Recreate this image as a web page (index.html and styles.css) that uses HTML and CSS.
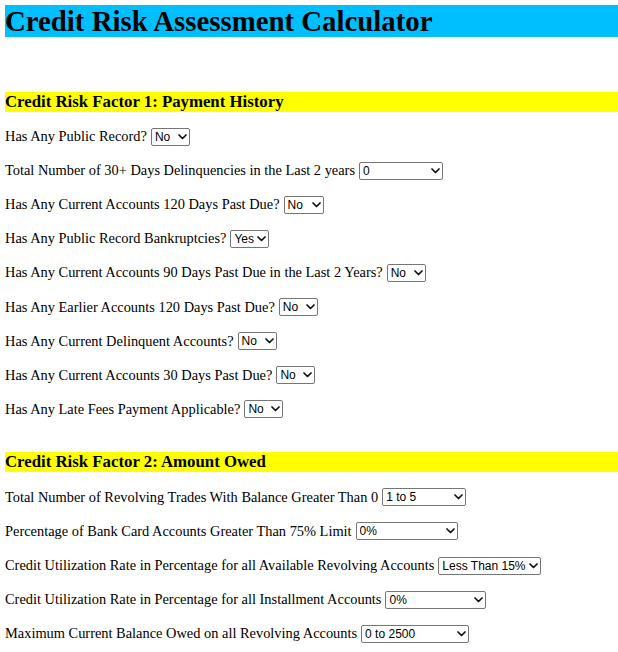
FILE: index.html
```html
<!DOCTYPE html>
<html lang="en">
<head>
<meta charset="utf-8">
<title>Credit Risk Assessment Calculator</title>
<link rel="stylesheet" href="styles.css">
</head>
<body>
<h1 class="title">Credit Risk Assessment Calculator</h1>

<section class="section">
  <h3 class="section-title">Credit Risk Factor 1: Payment History</h3>
  <div class="row"><label>Has Any Public Record?</label><span class="sel-wrap"><select class="sel w-39"><option>No</option><option>Yes</option></select><svg class="chev" viewBox="0 0 9 6"><path d="M1 1L4.5 4.5L8 1"/></svg></span></div>
  <div class="row"><label>Total Number of 30+ Days Delinquencies in the Last 2 years</label><span class="sel-wrap"><select class="sel w-84"><option>0</option><option>1</option><option>2</option><option>3 or More</option></select><svg class="chev" viewBox="0 0 9 6"><path d="M1 1L4.5 4.5L8 1"/></svg></span></div>
  <div class="row"><label>Has Any Current Accounts 120 Days Past Due?</label><span class="sel-wrap"><select class="sel w-40"><option>No</option><option>Yes</option></select><svg class="chev" viewBox="0 0 9 6"><path d="M1 1L4.5 4.5L8 1"/></svg></span></div>
  <div class="row"><label>Has Any Public Record Bankruptcies?</label><span class="sel-wrap"><select class="sel w-39"><option>Yes</option><option>No</option></select><svg class="chev" viewBox="0 0 9 6"><path d="M1 1L4.5 4.5L8 1"/></svg></span></div>
  <div class="row"><label>Has Any Current Accounts 90 Days Past Due in the Last 2 Years?</label><span class="sel-wrap"><select class="sel w-39"><option>No</option><option>Yes</option></select><svg class="chev" viewBox="0 0 9 6"><path d="M1 1L4.5 4.5L8 1"/></svg></span></div>
  <div class="row"><label>Has Any Earlier Accounts 120 Days Past Due?</label><span class="sel-wrap"><select class="sel w-39"><option>No</option><option>Yes</option></select><svg class="chev" viewBox="0 0 9 6"><path d="M1 1L4.5 4.5L8 1"/></svg></span></div>
  <div class="row"><label>Has Any Current Delinquent Accounts?</label><span class="sel-wrap"><select class="sel w-39"><option>No</option><option>Yes</option></select><svg class="chev" viewBox="0 0 9 6"><path d="M1 1L4.5 4.5L8 1"/></svg></span></div>
  <div class="row"><label>Has Any Current Accounts 30 Days Past Due?</label><span class="sel-wrap"><select class="sel w-39"><option>No</option><option>Yes</option></select><svg class="chev" viewBox="0 0 9 6"><path d="M1 1L4.5 4.5L8 1"/></svg></span></div>
  <div class="row"><label>Has Any Late Fees Payment Applicable?</label><span class="sel-wrap"><select class="sel w-39"><option>No</option><option>Yes</option></select><svg class="chev" viewBox="0 0 9 6"><path d="M1 1L4.5 4.5L8 1"/></svg></span></div>
</section>

<section class="section">
  <h3 class="section-title">Credit Risk Factor 2: Amount Owed</h3>
  <div class="row"><label>Total Number of Revolving Trades With Balance Greater Than 0</label><span class="sel-wrap"><select class="sel w-84"><option>1 to 5</option><option>0</option><option>6 or More</option></select><svg class="chev" viewBox="0 0 9 6"><path d="M1 1L4.5 4.5L8 1"/></svg></span></div>
  <div class="row"><label>Percentage of Bank Card Accounts Greater Than 75% Limit</label><span class="sel-wrap"><select class="sel w-102"><option>0%</option><option>1% to 50%</option><option>More Than 50%</option></select><svg class="chev" viewBox="0 0 9 6"><path d="M1 1L4.5 4.5L8 1"/></svg></span></div>
  <div class="row"><label>Credit Utilization Rate in Percentage for all Available Revolving Accounts</label><span class="sel-wrap"><select class="sel w-103"><option>Less Than 15%</option><option>15% to 50%</option><option>More Than 50%</option></select><svg class="chev" viewBox="0 0 9 6"><path d="M1 1L4.5 4.5L8 1"/></svg></span></div>
  <div class="row"><label>Credit Utilization Rate in Percentage for all Installment Accounts</label><span class="sel-wrap"><select class="sel w-101"><option>0%</option><option>1% to 50%</option><option>More Than 50%</option></select><svg class="chev" viewBox="0 0 9 6"><path d="M1 1L4.5 4.5L8 1"/></svg></span></div>
  <div class="row"><label>Maximum Current Balance Owed on all Revolving Accounts</label><span class="sel-wrap"><select class="sel w-108"><option>0 to 2500</option><option>2500 to 10000</option><option>More Than 10000</option></select><svg class="chev" viewBox="0 0 9 6"><path d="M1 1L4.5 4.5L8 1"/></svg></span></div>
</section>
</body>
</html>
```

FILE: styles.css
```css
html, body {
  background: #ffffff;
}

body {
  margin: 5px 0 0 5px;
  font-family: "Liberation Serif", "Times New Roman", serif;
  font-size: 14.4px;
  color: #000000;
}

.title {
  margin: 0 0 54.5px 0;
  background: #00bfff;
  font-size: 28.8px;
  font-weight: bold;
  height: 32px;
  line-height: 32px;
}

.section {
  display: flex;
  flex-direction: column;
  margin-bottom: 26px;
}

.section-title {
  margin: 0 0 8px 0;
  background: #ffff00;
  font-size: 16.8px;
  font-weight: bold;
  height: 20px;
  line-height: 20px;
}

.row {
  display: flex;
  align-items: center;
  gap: 4px;
  height: 34.1px;
}

.sel-wrap {
  position: relative;
  display: inline-flex;
}

.sel {
  appearance: none;
  -webkit-appearance: none;
  margin: 0;
  box-sizing: border-box;
  height: 18px;
  padding: 0 14px 0 3px;
  border: 1px solid #767676;
  border-radius: 2px;
  background: #ffffff;
  color: #000000;
  font-family: "Liberation Sans", Arial, sans-serif;
  font-size: 12px;
  line-height: 16px;
}

.chev {
  position: absolute;
  right: 3px;
  top: 6px;
  width: 9px;
  height: 6px;
  pointer-events: none;
}

.chev path {
  fill: none;
  stroke: #111111;
  stroke-width: 1.7;
  stroke-linecap: round;
  stroke-linejoin: round;
}

.w-39 { width: 39px; }
.w-40 { width: 40px; }
.w-84 { width: 84px; }
.w-101 { width: 101px; }
.w-102 { width: 102px; }
.w-103 { width: 103px; }
.w-108 { width: 108px; }
```
